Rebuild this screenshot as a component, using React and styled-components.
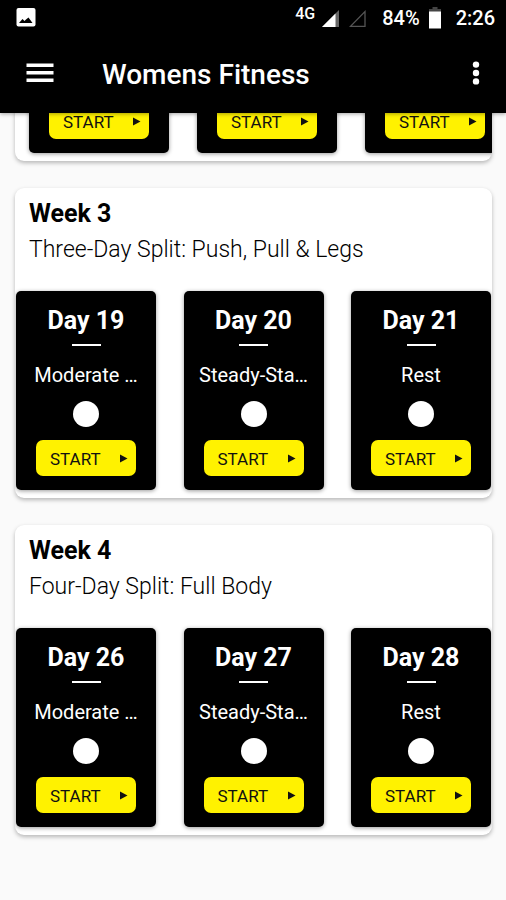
import React from "react";
import styled, { createGlobalStyle } from "styled-components";

const GlobalStyle = createGlobalStyle`
  * { box-sizing: border-box; }
  html { background: #fafafa; }
  body {
    margin: 0;
    background: #fafafa;
    color: #000;
    font-family: Roboto, "Liberation Sans", sans-serif;
  }
  h1, h2, h3, p { margin: 0; }
  button { font: inherit; color: inherit; cursor: pointer; }
`;

const Screen = styled.div`
  min-height: 100vh;
  overflow: hidden;
`;

const TopBar = styled.header`
  position: sticky;
  top: 0;
  z-index: 1;
  background: #000;
  color: #fff;
  box-shadow: 0 1px 4px rgba(0, 0, 0, 0.35);
`;

const StatusBar = styled.div`
  display: flex;
  align-items: center;
  height: 36px;
  padding: 0 11px 0 16px;
  font-size: 20px;
  font-weight: 500;
`;

const StatusGroup = styled.div`
  display: flex;
  align-items: center;
  margin-left: auto;
`;

const Network = styled.span`
  font-size: 16px;
  line-height: 20px;
  padding-bottom: 8px;
  margin-right: 7px;
`;

const Signals = styled.span`
  display: flex;
  gap: 10px;
  margin-right: 16px;
`;

const Battery = styled.span`
  display: flex;
  margin: 0 15px 0 9px;
`;

const AppBar = styled.div`
  display: flex;
  align-items: center;
  height: 77px;
  padding: 0 14px 0 20px;
`;

const IconButton = styled.button`
  display: flex;
  align-items: center;
  justify-content: center;
  width: ${(p) => p.$width}px;
  height: 40px;
  padding: 0 0 3px;
  border: 0;
  background: none;
  color: #fff;
`;

const Title = styled.h1`
  flex: 1;
  margin-left: 42px;
  font-size: 28px;
  line-height: 36px;
  font-weight: 500;
`;

const Weeks = styled.main`
  display: flex;
  flex-direction: column;
  gap: 27px;
  margin-top: -10px;
  padding: 0 14px 40px 15px;
`;

const WeekCard = styled.section`
  overflow: hidden;
  padding-bottom: 8px;
  border-radius: 9px;
  background: #fff;
  box-shadow: 0 2px 4px rgba(0, 0, 0, 0.27);
`;

const WeekHeader = styled.div`
  height: 103px;
  padding: 10px 14px 0;
`;

const WeekTitle = styled.h2`
  font-size: 25px;
  line-height: 32px;
  font-weight: 700;
`;

const WeekPlan = styled.p`
  margin-top: 4px;
  font-size: 23px;
  line-height: 32px;
  font-weight: 300;
  white-space: nowrap;
`;

const DayRow = styled.div`
  display: flex;
  justify-content: space-between;
  gap: ${(p) => (p.$start ? 28 : 0)}px;
  padding: 0 1px 0 ${(p) => (p.$start ? 14 : 1)}px;
`;

const DayCard = styled.article`
  flex: 0 0 140px;
  display: flex;
  flex-direction: column;
  align-items: center;
  padding: 0 14px 14px;
  border-radius: 5px;
  background: #000;
  color: #fff;
  box-shadow: 0 1px 4px rgba(0, 0, 0, 0.4);
`;

const DayName = styled.h3`
  margin-top: 14px;
  font-size: 25px;
  line-height: 32px;
  font-weight: 700;
  white-space: nowrap;
`;

const Divider = styled.span`
  width: 29px;
  height: 2px;
  margin-top: 7px;
  background: #fff;
`;

const Workout = styled.p`
  margin-top: 14px;
  font-size: 20px;
  line-height: 30px;
  white-space: nowrap;
`;

const Dot = styled.span`
  width: 26px;
  height: 26px;
  margin: 11px 0 13px;
  border-radius: 50%;
  background: #fff;
`;

const StartButton = styled.button`
  display: flex;
  align-items: center;
  justify-content: space-between;
  width: 100px;
  height: 36px;
  padding: 1px 8px 0 14px;
  border: 0;
  border-radius: 7px;
  background: #fff200;
  color: #111;
  font-size: 17px;
  line-height: 24px;
`;

const weeks = [
  { days: [{}, {}, {}] },
  {
    title: "Week 3",
    plan: "Three-Day Split: Push, Pull & Legs",
    days: [
      { name: "Day 19", workout: "Moderate …" },
      { name: "Day 20", workout: "Steady-Sta…" },
      { name: "Day 21", workout: "Rest" },
    ],
  },
  {
    title: "Week 4",
    plan: "Four-Day Split: Full Body",
    days: [
      { name: "Day 26", workout: "Moderate …" },
      { name: "Day 27", workout: "Steady-Sta…" },
      { name: "Day 28", workout: "Rest" },
    ],
  },
];

function Start() {
  return (
    <StartButton type="button">
      START
      <svg width="9" height="10" viewBox="0 0 9 10" aria-hidden="true">
        <path d="M1 0.5 8.5 4.5 1 8.5Z" fill="currentColor" />
      </svg>
    </StartButton>
  );
}

function Day({ name, workout }) {
  return (
    <DayCard>
      {name && (
        <>
          <DayName>{name}</DayName>
          <Divider />
          <Workout>{workout}</Workout>
          <Dot />
        </>
      )}
      <Start />
    </DayCard>
  );
}

function Week({ title, plan, days }) {
  return (
    <WeekCard>
      {title && (
        <WeekHeader>
          <WeekTitle>{title}</WeekTitle>
          <WeekPlan>{plan}</WeekPlan>
        </WeekHeader>
      )}
      <DayRow $start={!title}>
        {days.map((day, i) => (
          <Day key={i} {...day} />
        ))}
      </DayRow>
    </WeekCard>
  );
}

export default function App() {
  return (
    <Screen>
      <GlobalStyle />
      <TopBar>
        <StatusBar>
          <svg width="20" height="20" viewBox="0 0 20 20" aria-hidden="true">
            <rect x="0.5" y="0" width="19" height="18.5" rx="2" fill="#fff" />
            <path d="M3 15 6.5 11 8.5 13 10 11.5 12.5 9.5 16.5 15Z" fill="#000" />
          </svg>
          <StatusGroup>
            <Network>4G</Network>
            <Signals>
              <svg width="17" height="18" viewBox="0 0 17 18" aria-hidden="true">
                <path d="M17 1V18H0Z" fill="#666" />
                <path d="M13.5 4.5V18H0Z" fill="#fff" />
              </svg>
              <svg width="17" height="18" viewBox="0 0 17 18" aria-hidden="true">
                <path d="M16 2.5V17.3H1.5Z" fill="none" stroke="#555" strokeWidth="1.3" />
              </svg>
            </Signals>
            <span>84%</span>
            <Battery>
              <svg width="12" height="22" viewBox="0 0 12 22" aria-hidden="true">
                <path d="M3.5 0H8.5V2H12V5H0V2H3.5Z" fill="#444" />
                <path d="M0 4.5H12V21.5H0Z" fill="#fff" />
              </svg>
            </Battery>
            <span>2:26</span>
          </StatusGroup>
        </StatusBar>
        <AppBar>
          <IconButton type="button" aria-label="Open menu" $width={40}>
            <svg width="28" height="20" viewBox="0 0 28 20" aria-hidden="true">
              <path d="M0.5 0.5H27.5V4H0.5ZM0.5 8H27.5V11.5H0.5ZM0.5 15.5H27.5V19H0.5Z" fill="currentColor" />
            </svg>
          </IconButton>
          <Title>Womens Fitness</Title>
          <IconButton type="button" aria-label="More options" $width={32}>
            <svg width="8" height="24" viewBox="0 0 8 24" aria-hidden="true">
              <circle cx="4" cy="3.6" r="3.2" fill="currentColor" />
              <circle cx="4" cy="12" r="3.2" fill="currentColor" />
              <circle cx="4" cy="20.4" r="3.2" fill="currentColor" />
            </svg>
          </IconButton>
        </AppBar>
      </TopBar>
      <Weeks>
        {weeks.map((week, i) => (
          <Week key={i} {...week} />
        ))}
      </Weeks>
    </Screen>
  );
}
